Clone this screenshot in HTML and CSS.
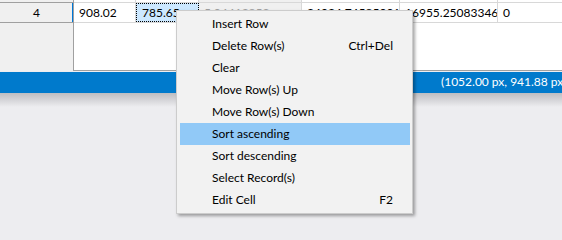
FILE: index.html
```html
<!DOCTYPE html>
<html lang="en">
<head>
    <meta charset="UTF-8">
    <title>Data Grid</title>
    <link rel="stylesheet" href="styles.css">
</head>
<body>
    <div class="window">
        <div class="grid">
            <div class="row row-prev">
                <div class="cell head"></div>
                <div class="cell c1"></div>
                <div class="cell c2"></div>
                <div class="cell c3 readonly"></div>
                <div class="cell c4"></div>
                <div class="cell c5"></div>
                <div class="cell c6"></div>
            </div>
            <div class="row">
                <div class="cell head current">4</div>
                <div class="cell c1">908.02</div>
                <div class="cell c2 selected">785.65</div>
                <div class="cell c3 readonly">5.04413852</div>
                <div class="cell c4">24034.74585001</div>
                <div class="cell c5">16955.25083346</div>
                <div class="cell c6">0</div>
            </div>
            <div class="row row-empty">
                <div class="cell head"></div>
                <div class="filler"></div>
            </div>
        </div>
        <div class="statusbar">(1052.00 px, 941.88 px): (255, 255, 255)</div>
        <div class="status-shadow"></div>
    </div>

    <div class="menu">
        <div class="menu-item"><span>Insert Row</span></div>
        <div class="menu-item"><span>Delete Row(s)</span><span class="shortcut">Ctrl+Del</span></div>
        <div class="menu-item"><span>Clear</span></div>
        <div class="menu-item"><span>Move Row(s) Up</span></div>
        <div class="menu-item"><span>Move Row(s) Down</span></div>
        <div class="menu-item hover"><span>Sort ascending</span></div>
        <div class="menu-item"><span>Sort descending</span></div>
        <div class="menu-item"><span>Select Record(s)</span></div>
        <div class="menu-item"><span>Edit Cell</span><span class="shortcut">F2</span></div>
    </div>
</body>
</html>
```

FILE: styles.css
```css
* {
    margin: 0;
    padding: 0;
    box-sizing: border-box;
}

body {
    font-family: Lato, "Liberation Sans", sans-serif;
    font-size: 12px;
    color: #000;
    background: #ededf0;
    width: 562px;
    height: 240px;
    overflow: hidden;
    position: relative;
}

.grid {
    background: #fff;
    border-bottom: 1px solid #a0a0a0;
}

.row {
    display: flex;
    height: 20px;
    border-bottom: 1px solid #d8d8d8;
}

.row-prev {
    height: 3px;
}

.row-empty {
    height: 47px;
    border-bottom: none;
}

.cell {
    flex: none;
    padding-left: 5px;
    line-height: 19px;
    white-space: nowrap;
    overflow: hidden;
    border-right: 1px solid #d8d8d8;
}

.head {
    width: 74px;
    padding-left: 0;
    text-align: center;
    background: #f0f0f0;
    border-right: 1px solid #a0a0a0;
}

.row .head {
    margin-bottom: -1px;
    border-bottom: 1px solid #a0a0a0;
}

.row-empty .head {
    border-bottom: none;
}

.head.current {
    box-shadow: inset -1px 0 0 #0078d7;
}

.c1 {
    width: 62px;
}

.c2 {
    width: 63px;
}

.c3 {
    width: 103px;
}

.c4,
.c5 {
    width: 98px;
}

.c6 {
    flex: 1;
    border-right: none;
}

.readonly {
    background: #f0f0f0;
    color: #a0a0a0;
}

.selected {
    background: #cce8ff;
    border: 1px dotted #000;
    line-height: 17px;
}

.filler {
    flex: 1;
    background: #fff;
}

.statusbar {
    margin-top: 1px;
    height: 21px;
    line-height: 20px;
    background: #007acc;
    color: #fff;
    padding-left: 441px;
    white-space: nowrap;
    overflow: hidden;
}

.status-shadow {
    height: 14px;
    background: linear-gradient(#bdbdc1, #ededf0);
}

.menu {
    position: absolute;
    left: 176px;
    top: 10px;
    width: 237px;
    padding: 2px 2px 2px 3px;
    background: #f2f2f2;
    border: 1px solid #cccccc;
    box-shadow: 2px 2px 3px rgba(0, 0, 0, 0.35);
}

.menu-item {
    display: flex;
    justify-content: space-between;
    height: 22px;
    line-height: 22px;
    padding: 0 17px 0 32px;
}

.menu-item.hover {
    background: #91c9f7;
}
```
